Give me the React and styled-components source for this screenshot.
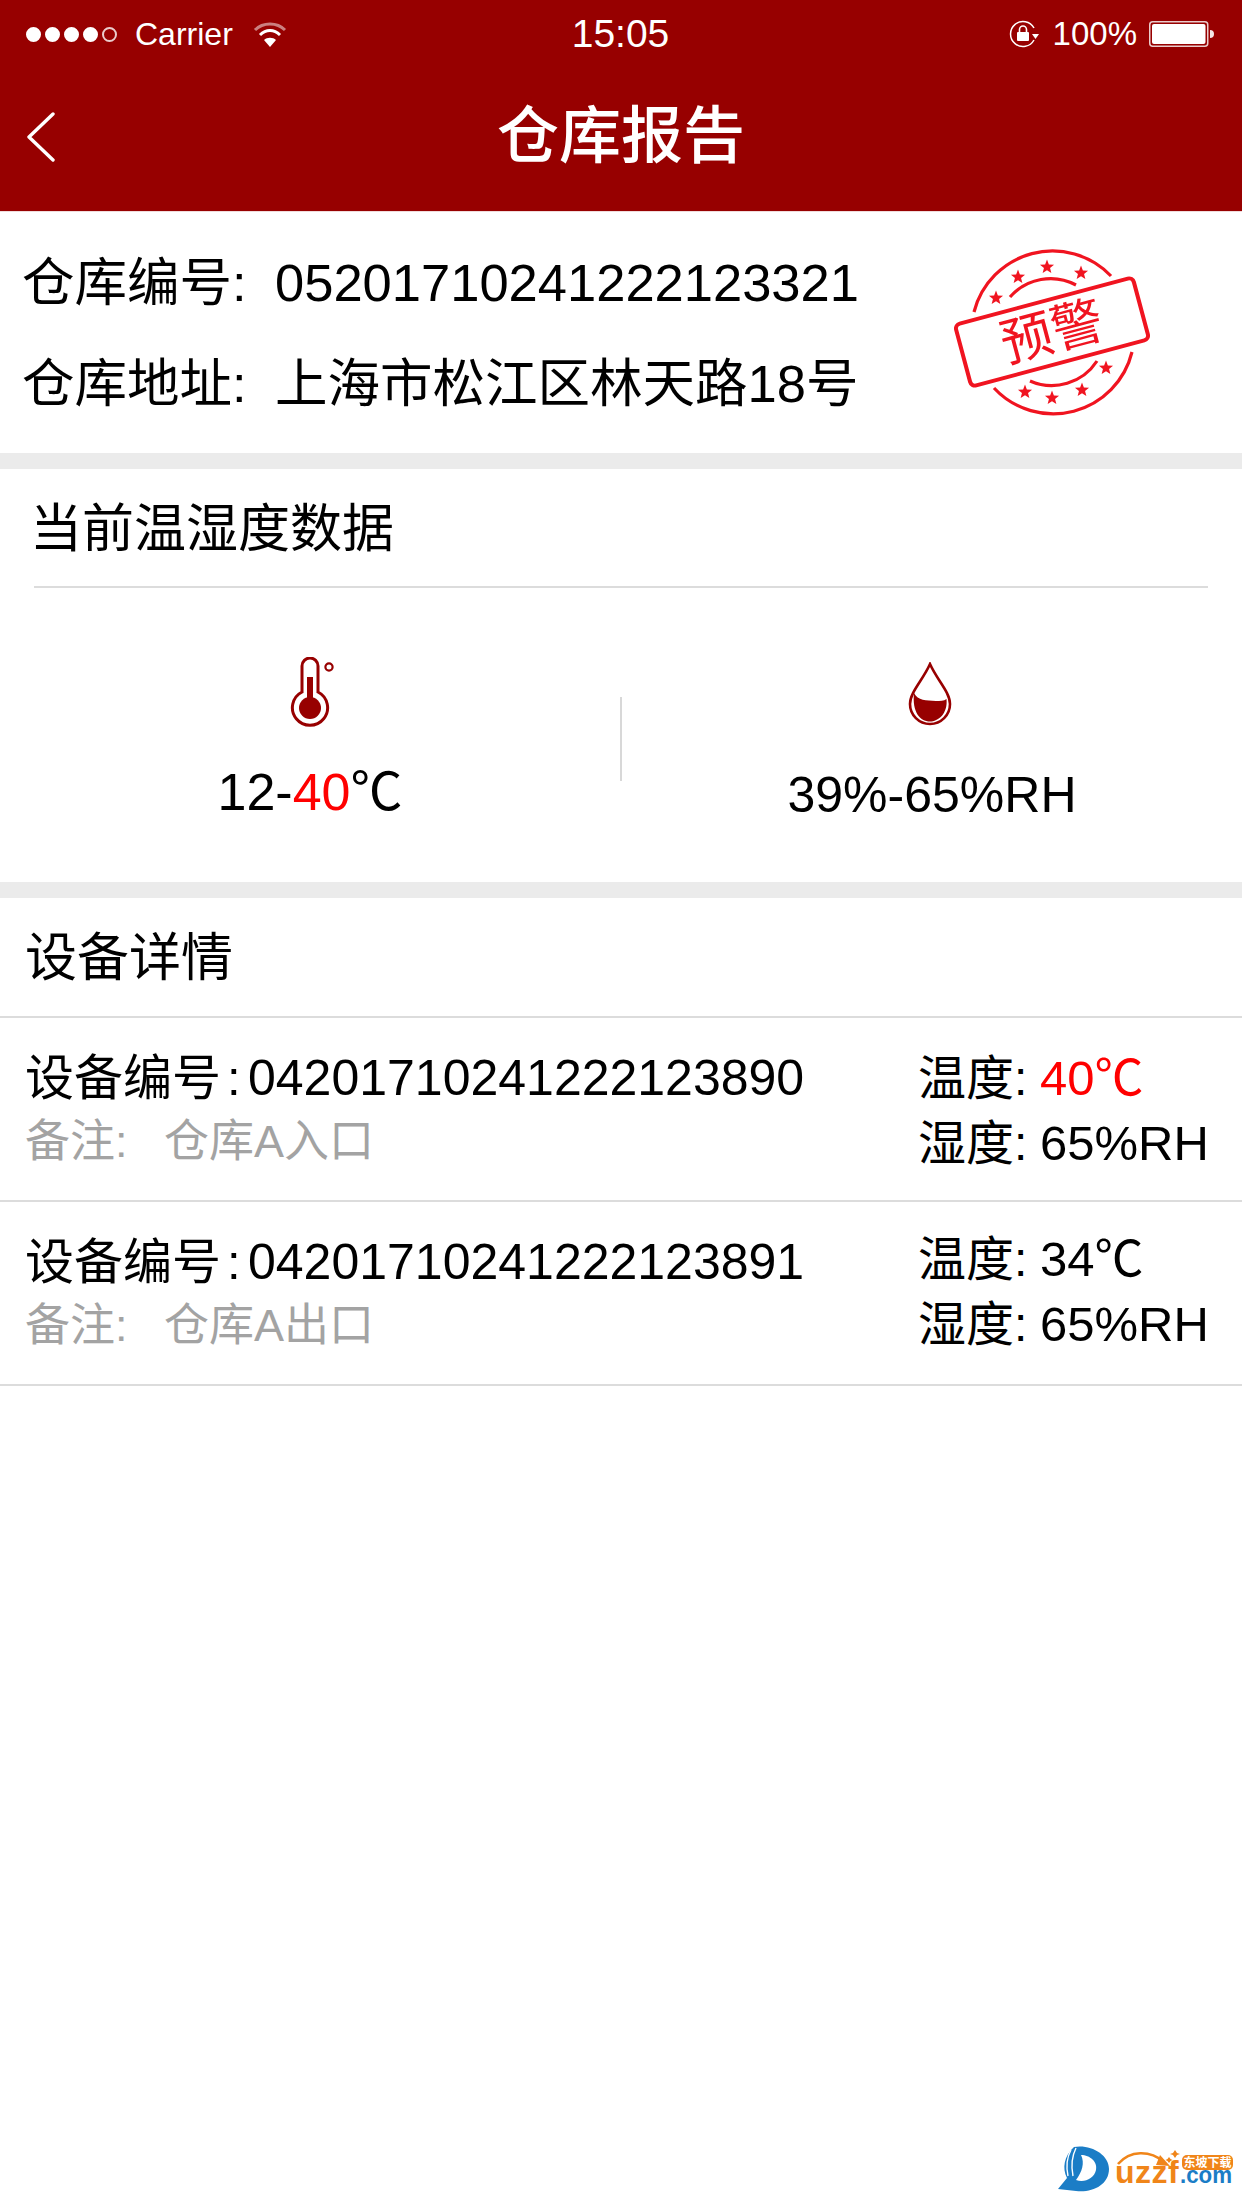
import React from "react";
import styled, { createGlobalStyle } from "styled-components";

const FONT = `"Liberation Sans", "Noto Sans CJK SC", sans-serif`;
const RED = "#ff0000";
const DARK_RED = "#970000";
const STAMP_RED = "#f01420";

const Global = createGlobalStyle`
  html, body {
    margin: 0;
    padding: 0;
    background: #fff;
    font-family: ${FONT};
    color: #000;
  }
`;

const Page = styled.div`
  position: relative;
  width: 1242px;
  height: 2208px;
  overflow: hidden;
  background: #fff;
`;

const Header = styled.header`
  height: 211px;
  background: ${DARK_RED};
  color: #fff;
  border-bottom: 1px solid #f0dcdc;
`;

const StatusBar = styled.div`
  height: 68px;
  padding: 0 27px 0 26px;
  display: grid;
  grid-template-columns: 1fr auto 1fr;
  align-items: center;
`;

const StatusLeft = styled.div`
  display: flex;
  align-items: center;
`;

const StatusRight = styled.div`
  display: flex;
  align-items: center;
  justify-content: flex-end;
`;

const Dots = styled.div`
  display: flex;
  gap: 4px;
  margin-right: 18px;
`;

const Dot = styled.i`
  width: 15px;
  height: 15px;
  border-radius: 50%;
  box-sizing: border-box;
  border: 2px solid #fff;
  background: ${(p) => (p.$hollow ? "transparent" : "#fff")};
  opacity: ${(p) => (p.$hollow ? 0.8 : 1)};
`;

const Carrier = styled.span`
  font-size: 32px;
  margin-right: 20px;
`;

const Clock = styled.span`
  font-size: 39px;
`;

const Percent = styled.span`
  font-size: 33px;
  margin: 0 12px;
`;

const NavBar = styled.div`
  height: 142px;
  padding-bottom: 4px;
  box-sizing: border-box;
  display: grid;
  grid-template-columns: 1fr auto 1fr;
  align-items: center;
`;

const BackButton = styled.div`
  padding-left: 26px;
  display: flex;
`;

const Title = styled.h1`
  margin: 0;
  font-size: 62px;
  font-weight: 500;
  line-height: 70px;
`;

const InfoSection = styled.section`
  height: 241px;
  box-sizing: border-box;
  padding: 20px 0 0 22px;
  display: flex;
  justify-content: space-between;
`;

const InfoLine = styled.div`
  font-size: 52.5px;
  line-height: 101px;
  white-space: nowrap;
`;

const InfoLabel = styled.span`
  display: inline-block;
  width: 253px;
`;

const Stamp = styled.svg`
  width: 240px;
  height: 200px;
  margin: -2px 82px 0 0;
  flex: none;
`;

const Gap = styled.div`
  height: 16px;
  background: #ebebeb;
`;

const SectionTitle = styled.h2`
  margin: ${(p) => (p.$inset ? "0 34px" : "0")};
  padding-left: ${(p) => (p.$inset ? "0" : "25px")};
  text-indent: ${(p) => (p.$inset ? "-4px" : "0")};
  height: ${(p) => (p.$inset ? 119 : 120)}px;
  line-height: 120px;
  box-sizing: border-box;
  font-size: 52px;
  font-weight: 400;
  border-bottom: 2px solid #dcdcdc;
`;

const Climate = styled.section`
  height: 294px;
  box-sizing: border-box;
  padding-top: 69px;
  display: grid;
  grid-template-columns: 1fr 2px 1fr;
  align-items: start;
`;

const ClimateCell = styled.div`
  display: flex;
  flex-direction: column;
  align-items: center;
  padding-top: ${(p) => p.$top || 0}px;
`;

const ClimateValue = styled.div`
  margin-top: ${(p) => p.$gap}px;
  font-size: ${(p) => p.$size}px;
  line-height: 60px;
  white-space: nowrap;
`;

const Warn = styled.span`
  color: ${RED};
`;

const Divider = styled.div`
  width: 2px;
  height: 84px;
  margin-top: 40px;
  background: #d8d8d8;
`;

const DeviceRow = styled.div`
  height: 184px;
  box-sizing: border-box;
  padding: 28px 22px 0 25px;
  border-bottom: 2px solid #dcdcdc;
  display: flex;
  justify-content: space-between;
`;

const DeviceMain = styled.div`
  line-height: 64px;
`;

const DeviceId = styled.div`
  font-size: 50px;
  white-space: nowrap;
`;

const IdLabel = styled.span`
  font-size: 49px;
  display: inline-block;
  width: 223px;
`;

const IdColon = styled.span`
  margin-left: 6px;
`;

const Remark = styled.div`
  font-size: 45px;
  color: #a3a3a3;
  white-space: nowrap;
`;

const RemarkLabel = styled.span`
  display: inline-block;
  width: 139px;
`;

const Readings = styled.div`
  width: 302px;
  line-height: 64px;
  margin-top: ${(p) => p.$shift || 0}px;
`;

const Reading = styled.div`
  font-size: 49px;
  white-space: nowrap;
`;

const ReadingLabel = styled.span`
  font-size: 48px;
  display: inline-block;
  width: 122px;
`;

const Watermark = styled.svg`
  position: absolute;
  right: 0;
  bottom: 0;
  width: 202px;
  height: 88px;
`;

function Star({ x, y }) {
  const pts = [];
  for (let i = 0; i < 10; i++) {
    const r = i % 2 ? 3.2 : 7.4;
    const a = -Math.PI / 2 + (i * Math.PI) / 5;
    pts.push(`${x + r * Math.cos(a)},${y + r * Math.sin(a)}`);
  }
  return <polygon points={pts.join(" ")} fill={STAMP_RED} />;
}

const STARS = [
  [76, 68], [98, 47], [127, 37], [161, 43],
  [186, 138], [162, 160], [132, 168], [105, 162],
];

function StampIcon() {
  return (
    <Stamp viewBox="0 0 240 200">
      <g fill="none" stroke={STAMP_RED}>
        <path d="M54 82 A81 81 0 0 1 191 46" strokeWidth="3.2" />
        <path d="M212 122 A81 81 0 0 1 74 158" strokeWidth="3.2" />
        <path d="M90 67 A54 54 0 0 1 156 55" strokeWidth="3.2" />
        <path d="M110 151 A54 54 0 0 0 177 131" strokeWidth="3.2" />
        <rect x="-92" y="-32" width="184" height="64" rx="5" transform="translate(132 102) rotate(-15)" strokeWidth="4" />
      </g>
      {STARS.map(([x, y]) => <Star key={x + "-" + y} x={x} y={y} />)}
      <text x="132" y="102" transform="rotate(-15 132 102)" dy="18" textAnchor="middle" fontSize="52" fill={STAMP_RED} fontFamily={FONT}>预警</text>
    </Stamp>
  );
}

function Thermometer() {
  return (
    <svg width="46" height="71" viewBox="-3 0 46 71" style={{ marginLeft: 6 }}>
      <path d="M9 35 V9 a8 8 0 0 1 16 0 V35 A17.6 17.6 0 1 1 9 35 Z" fill="none" stroke={DARK_RED} strokeWidth="3" />
      <circle cx="17" cy="51" r="11" fill={DARK_RED} />
      <rect x="14" y="20" width="6" height="28" fill={DARK_RED} />
      <circle cx="36" cy="10" r="3.6" fill="none" stroke={DARK_RED} strokeWidth="2.2" />
    </svg>
  );
}

function Drop() {
  return (
    <svg width="44" height="65" viewBox="0 0 44 65" style={{ marginRight: 4 }}>
      <path d="M22 2 C15 18 2 30 2 42 A20 20 0 0 0 42 42 C42 30 29 18 22 2 Z" fill="none" stroke={DARK_RED} strokeWidth="2.6" />
      <path d="M6 31 C10 39 18 38 28 39 C32 39 36 39 38.5 37 C40 52 30 59.5 22 59.5 C12 59.5 4 50 6 31 Z" fill={DARK_RED} />
    </svg>
  );
}

function Wifi() {
  return (
    <svg width="34" height="25" viewBox="0 0 34 25" fill="none" stroke="#fff">
      <path d="M2 8 C10 0 24 0 32 8" strokeWidth="3" opacity="0.5" />
      <path d="M7 13 C13 7 21 7 27 13" strokeWidth="3" />
      <path d="M17 25 L11 18 C14 15 20 15 23 18 Z" fill="#fff" stroke="none" />
    </svg>
  );
}

function RotationLock() {
  return (
    <svg width="33" height="28" viewBox="0 0 33 28" fill="none">
      <path d="M26 20 A12.5 12.5 0 1 1 26 8" stroke="#fff" strokeWidth="1.5" />
      <path d="M24 14 h7 l-3.5 5 Z" fill="#fff" />
      <rect x="9" y="12" width="12" height="9" rx="1" fill="#fff" />
      <path d="M11.5 12 V9.5 a3.5 3.5 0 0 1 7 0 V12" stroke="#fff" strokeWidth="1.6" />
    </svg>
  );
}

function Battery() {
  return (
    <svg width="66" height="26" viewBox="0 0 66 26">
      <rect x="0.75" y="0.75" width="58" height="24.5" rx="3" fill="none" stroke="#fff" strokeWidth="1.5" opacity="0.8" />
      <rect x="3" y="3" width="53.5" height="20" rx="2" fill="#fff" />
      <path d="M61 9 a4 4 0 0 1 0 8 Z" fill="#fff" opacity="0.9" />
    </svg>
  );
}

function BackArrow() {
  return (
    <svg width="30" height="50" viewBox="0 0 30 50" fill="none">
      <path d="M27 2 L3 25 L27 48" stroke="#fff" strokeWidth="3.4" strokeLinecap="round" strokeLinejoin="round" />
    </svg>
  );
}

function UzzfLogo() {
  return (
    <Watermark viewBox="0 0 202 88">
      <path d="M34 27 C50 24 69 34 69 49 C69 65 52 73 36 71 L18 69 L27 58 C22 48 24 36 34 27 Z" fill="#1b7dc6" />
      <path d="M41 35 C50 35 58 42 56 50 C54 59 44 63 36 60 C42 52 45 43 41 35 Z" fill="#fff" />
      <path d="M31 30 C27 37 26 46 28 56 M36 28 C32 36 31 46 33 56" stroke="#fff" strokeWidth="1.4" fill="none" />
      <path d="M78 44 C90 30 110 30 124 42" stroke="#f08519" strokeWidth="2.6" fill="none" />
      <path d="M120 35 L130 46 L116 45 Z" fill="#f08519" />
      <path d="M135 30 l2 3 l3 1 l-3 1 l-2 3 l-2 -3 l-3 -1 l3 -1 Z M129 37 l1.5 2 l2 1 l-2 1 l-1.5 2 l-1.5 -2 l-2 -1 l2 -1 Z" fill="#f08519" />
      <text x="75" y="63" fontSize="32" fontWeight="700" fill="#f08519" letterSpacing="0.5" fontFamily={FONT}>uzzf</text>
      <text x="140" y="63" fontSize="24" fontWeight="700" fill="#1b7dc6" textLength="52" lengthAdjust="spacingAndGlyphs" fontFamily={FONT}>.com</text>
      <rect x="142" y="35" width="51" height="15" rx="5" fill="#f08519" />
      <text x="167.5" y="47" textAnchor="middle" fontSize="12" fontWeight="700" fill="#fff" fontFamily={FONT}>东坡下载</text>
    </Watermark>
  );
}

const devices = [
  { id: "04201710241222123890", remark: "仓库A入口", temp: "40℃", hot: true, humidity: "65%RH" },
  { id: "04201710241222123891", remark: "仓库A出口", temp: "34℃", hot: false, humidity: "65%RH", shift: -3 },
];

export default function App() {
  return (
    <Page>
      <Global />
      <Header>
        <StatusBar>
          <StatusLeft>
            <Dots>
              <Dot /><Dot /><Dot /><Dot /><Dot $hollow />
            </Dots>
            <Carrier>Carrier</Carrier>
            <Wifi />
          </StatusLeft>
          <Clock>15:05</Clock>
          <StatusRight>
            <RotationLock />
            <Percent>100%</Percent>
            <Battery />
          </StatusRight>
        </StatusBar>
        <NavBar>
          <BackButton><BackArrow /></BackButton>
          <Title>仓库报告</Title>
        </NavBar>
      </Header>

      <InfoSection>
        <div>
          <InfoLine><InfoLabel>仓库编号:</InfoLabel>05201710241222123321</InfoLine>
          <InfoLine><InfoLabel>仓库地址:</InfoLabel>上海市松江区林天路18号</InfoLine>
        </div>
        <StampIcon />
      </InfoSection>
      <Gap />

      <SectionTitle $inset>当前温湿度数据</SectionTitle>
      <Climate>
        <ClimateCell>
          <Thermometer />
          <ClimateValue $gap={34} $size={52}>12-<Warn>40</Warn>℃</ClimateValue>
        </ClimateCell>
        <Divider />
        <ClimateCell $top={5}>
          <Drop />
          <ClimateValue $gap={38} $size={50}>39%-65%RH</ClimateValue>
        </ClimateCell>
      </Climate>
      <Gap />

      <SectionTitle>设备详情</SectionTitle>
      {devices.map((d) => (
        <DeviceRow key={d.id}>
          <DeviceMain>
            <DeviceId><IdLabel>设备编号<IdColon>:</IdColon></IdLabel>{d.id}</DeviceId>
            <Remark><RemarkLabel>备注:</RemarkLabel>{d.remark}</Remark>
          </DeviceMain>
          <Readings $shift={d.shift}>
            <Reading><ReadingLabel>温度:</ReadingLabel>{d.hot ? <Warn>{d.temp}</Warn> : d.temp}</Reading>
            <Reading><ReadingLabel>湿度:</ReadingLabel>{d.humidity}</Reading>
          </Readings>
        </DeviceRow>
      ))}

      <UzzfLogo />
    </Page>
  );
}
